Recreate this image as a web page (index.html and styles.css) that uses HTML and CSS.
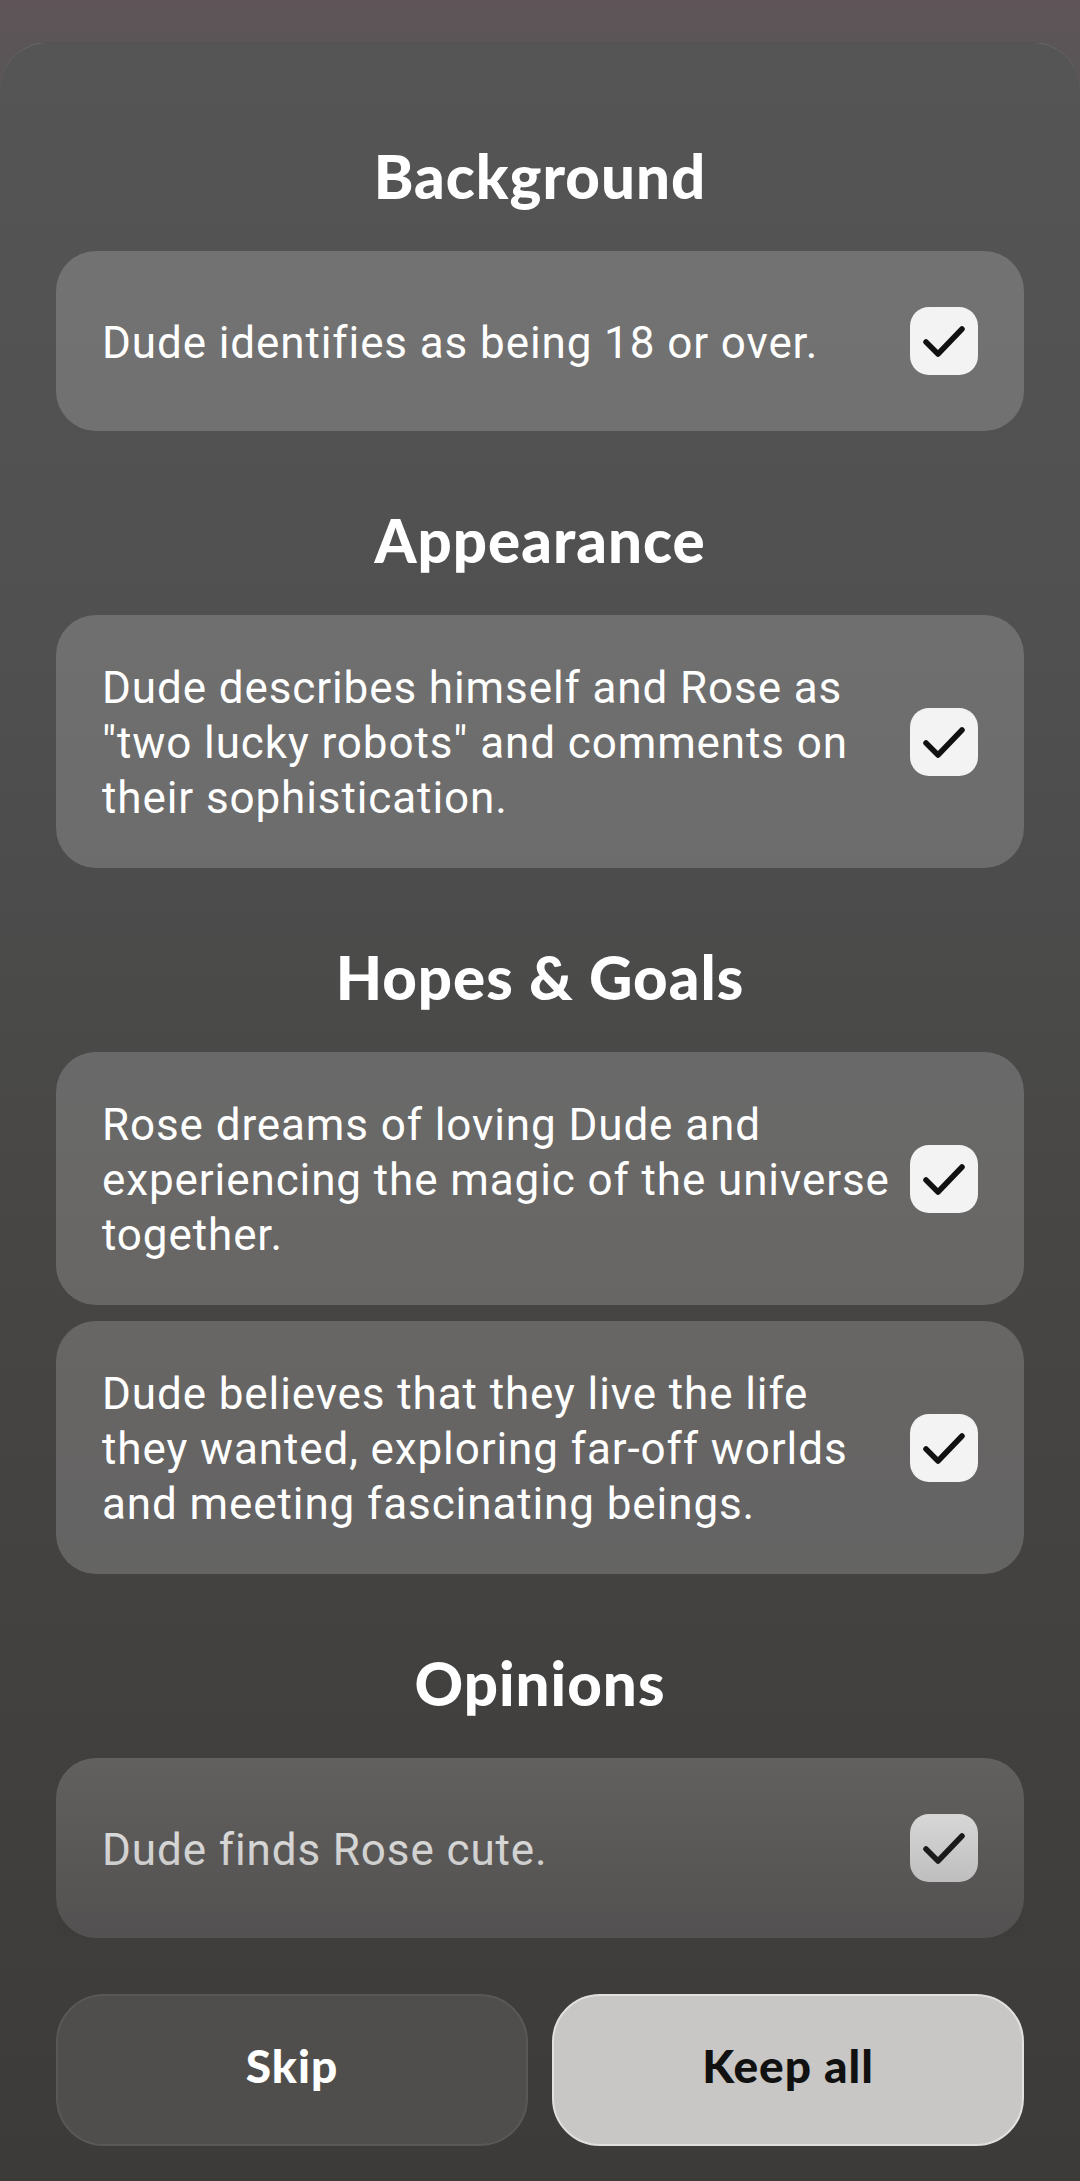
FILE: index.html
```html
<!DOCTYPE html>
<html lang="en">
<head>
<meta charset="utf-8">
<title>Memories</title>
<link rel="stylesheet" href="styles.css">
</head>
<body>
<div class="screen">
  <div class="sheet">
    <div class="content">
      <section class="section">
        <h2 class="heading">Background</h2>
        <div class="card">
          <p class="card-text">Dude identifies as being 18 or over.</p>
          <span class="check"><svg viewBox="0 0 68 68" width="68" height="68"><path d="M16 35 L28 47 L52 22" /></svg></span>
        </div>
      </section>
      <section class="section">
        <h2 class="heading">Appearance</h2>
        <div class="card">
          <p class="card-text">Dude describes himself and Rose as "two lucky robots" and comments on their sophistication.</p>
          <span class="check"><svg viewBox="0 0 68 68" width="68" height="68"><path d="M16 35 L28 47 L52 22" /></svg></span>
        </div>
      </section>
      <section class="section">
        <h2 class="heading">Hopes &amp; Goals</h2>
        <div class="card">
          <p class="card-text">Rose dreams of loving Dude and experiencing the magic of the universe together.</p>
          <span class="check"><svg viewBox="0 0 68 68" width="68" height="68"><path d="M16 35 L28 47 L52 22" /></svg></span>
        </div>
        <div class="card">
          <p class="card-text">Dude believes that they live the life they wanted, exploring far-off worlds and meeting fascinating beings.</p>
          <span class="check"><svg viewBox="0 0 68 68" width="68" height="68"><path d="M16 35 L28 47 L52 22" /></svg></span>
        </div>
      </section>
      <section class="section">
        <h2 class="heading">Opinions</h2>
        <div class="card">
          <p class="card-text">Dude finds Rose cute.</p>
          <span class="check"><svg viewBox="0 0 68 68" width="68" height="68"><path d="M16 35 L28 47 L52 22" /></svg></span>
        </div>
      </section>
    </div>
    <div class="footer">
      <button class="btn btn-skip">Skip</button>
      <button class="btn btn-keep">Keep all</button>
    </div>
  </div>
</div>
</body>
</html>
```
FILE: styles.css
```css
* { box-sizing: border-box; }
html, body {
  margin: 0;
  padding: 0;
}
body {
  width: 1080px;
  height: 2181px;
  overflow: hidden;
  background: linear-gradient(180deg, #5f5558 0px, #5a5557 60px, #4a4948 1000px, #3c3a39 2181px);
  font-family: Roboto, "Liberation Sans", sans-serif;
}
.screen {
  height: 2181px;
  padding-top: 42px;
  display: flex;
  flex-direction: column;
}
.sheet {
  flex: 1;
  display: flex;
  flex-direction: column;
  border-radius: 48px 48px 0 0;
  border-top: 1.5px solid rgba(255, 255, 255, 0.12);
  background: linear-gradient(180deg, #555555 0px, #505050 600px, #474645 1200px, #3d3b3a 2139px);
  padding: 0 56px;
}
.content {
  flex: 1;
  display: flex;
  flex-direction: column;
  padding-top: 98px;
}
.section {
  display: flex;
  flex-direction: column;
  gap: 16px;
  margin-bottom: 74px;
}
.section:last-child { margin-bottom: 0; }
.heading {
  margin: 0 0 24px;
  height: 70px;
  line-height: 70px;
  text-align: center;
  color: #ffffff;
  font-family: Lato, "Open Sans", sans-serif;
  font-weight: 900;
  font-size: 60px;
  letter-spacing: 1px;
}
.card {
  display: flex;
  align-items: center;
  justify-content: space-between;
  min-height: 180px;
  padding: 42px 46px;
  border-radius: 40px;
  background: rgba(255, 255, 255, 0.18);
}
.card-text {
  flex: 0 1 800px;
  margin: 0;
  padding-top: 4px;
  color: #ffffff;
  font-size: 44px;
  line-height: 55px;
  letter-spacing: 0.9px;
}
.check {
  flex: none;
  width: 68px;
  height: 68px;
  border-radius: 19px;
  background: #f3f3f3;
  display: flex;
}
.check svg path {
  fill: none;
  stroke: #111111;
  stroke-width: 5.5;
  stroke-linecap: round;
  stroke-linejoin: round;
}
.footer {
  position: relative;
  display: flex;
  gap: 24px;
  padding: 56px 0 36px;
}
.footer::before {
  content: "";
  position: absolute;
  left: 0;
  right: 0;
  bottom: 100%;
  height: 200px;
  background: linear-gradient(180deg, rgba(61, 59, 58, 0) 0%, rgba(61, 59, 58, 0.4) 100%);
  pointer-events: none;
}
.btn {
  flex: 1;
  height: 152px;
  padding: 0 0 10px;
  border-radius: 48px;
  font-family: Lato, "Open Sans", sans-serif;
  font-weight: 900;
  font-size: 46px;
  letter-spacing: 1px;
  cursor: pointer;
}
.btn-skip {
  background: #4f4e4d;
  border: 2px solid #595857;
  color: #ffffff;
}
.btn-keep {
  background: #c8c7c5;
  border: 2px solid #e0e0df;
  color: #111111;
}
```
